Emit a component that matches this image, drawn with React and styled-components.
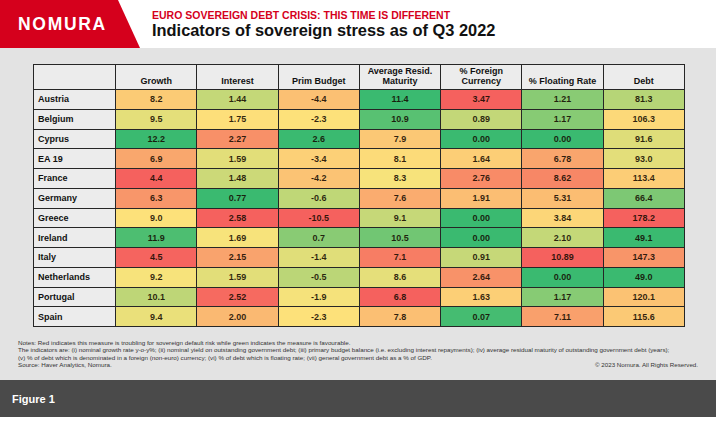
import React from 'react'
import styled, { createGlobalStyle } from 'styled-components'

// colour scale endpoints (red = bad, yellow = median, green = good)
const RED = [245, 97, 94]
const YELLOW = [253, 228, 123]
const GREEN = [58, 186, 112]

const columns = [
    { label: ['Growth'], higherBetter: true },
    { label: ['Interest'], higherBetter: false },
    { label: ['Prim Budget'], higherBetter: true },
    { label: ['Average Resid.', 'Maturity'], higherBetter: true },
    { label: ['% Foreign', 'Currency'], higherBetter: false },
    { label: ['% Floating Rate'], higherBetter: false },
    { label: ['Debt'], higherBetter: false },
]

const rows = [
    ['Austria', '8.2', '1.44', '-4.4', '11.4', '3.47', '1.21', '81.3'],
    ['Belgium', '9.5', '1.75', '-2.3', '10.9', '0.89', '1.17', '106.3'],
    ['Cyprus', '12.2', '2.27', '2.6', '7.9', '0.00', '0.00', '91.6'],
    ['EA 19', '6.9', '1.59', '-3.4', '8.1', '1.64', '6.78', '93.0'],
    ['France', '4.4', '1.48', '-4.2', '8.3', '2.76', '8.62', '113.4'],
    ['Germany', '6.3', '0.77', '-0.6', '7.6', '1.91', '5.31', '66.4'],
    ['Greece', '9.0', '2.58', '-10.5', '9.1', '0.00', '3.84', '178.2'],
    ['Ireland', '11.9', '1.69', '0.7', '10.5', '0.00', '2.10', '49.1'],
    ['Italy', '4.5', '2.15', '-1.4', '7.1', '0.91', '10.89', '147.3'],
    ['Netherlands', '9.2', '1.59', '-0.5', '8.6', '2.64', '0.00', '49.0'],
    ['Portugal', '10.1', '2.52', '-1.9', '6.8', '1.63', '1.17', '120.1'],
    ['Spain', '9.4', '2.00', '-2.3', '7.8', '0.07', '7.11', '115.6'],
]

const mix = (a, b, t) => {
    const c = a.map((v, i) => Math.round(v + (b[i] - v) * t))
    return `rgb(${c[0]}, ${c[1]}, ${c[2]})`
}

// excel style 3 colour scale: min, 50th percentile, max
const scaleFor = (colIndex) => {
    const values = rows.map((r) => parseFloat(r[colIndex + 1]))
    const sorted = [...values].sort((a, b) => a - b)
    const n = sorted.length
    const mid = n % 2 ? sorted[(n - 1) / 2] : (sorted[n / 2 - 1] + sorted[n / 2]) / 2
    const min = sorted[0]
    const max = sorted[n - 1]
    const { higherBetter } = columns[colIndex]
    const low = higherBetter ? RED : GREEN
    const high = higherBetter ? GREEN : RED
    return (v) => {
        if (v <= mid) return mix(low, YELLOW, mid === min ? 1 : (v - min) / (mid - min))
        return mix(YELLOW, high, (v - mid) / (max - mid))
    }
}

const scales = columns.map((_, i) => scaleFor(i))

function App() {
    return (
        <>
            <GlobalStyle />
            <Frame>
                {/* header */}
                <Header>
                    <LogoBlock>
                        <LogoText>NOMURA</LogoText>
                    </LogoBlock>
                    <TitleBlock>
                        <Kicker>EURO SOVEREIGN DEBT CRISIS: THIS TIME IS DIFFERENT</Kicker>
                        <Title>Indicators of sovereign stress as of Q3 2022</Title>
                    </TitleBlock>
                </Header>
                {/* chart panel */}
                <Panel>
                    <Table>
                        <colgroup>
                            <col style={{ width: 82 }} />
                            {columns.map((c) => <col key={c.label[0]} />)}
                        </colgroup>
                        <thead>
                            <tr>
                                <HeadCell />
                                {columns.map((c) => (
                                    <HeadCell key={c.label[0]}>
                                        {c.label.map((l, i) => (
                                            <React.Fragment key={l}>
                                                {i > 0 && <br />}
                                                {l}
                                            </React.Fragment>
                                        ))}
                                    </HeadCell>
                                ))}
                            </tr>
                        </thead>
                        <tbody>
                            {rows.map((r) => (
                                <Row key={r[0]}>
                                    <CountryCell>{r[0]}</CountryCell>
                                    {r.slice(1).map((v, i) => (
                                        <ValueCell key={i} $bg={scales[i](parseFloat(v))}>{v}</ValueCell>
                                    ))}
                                </Row>
                            ))}
                        </tbody>
                    </Table>
                    <Notes>
                        <NoteLine>Notes: Red indicates this measure is troubling for sovereign default risk while green indicates the measure is favourable.</NoteLine>
                        <NoteLine>The indicators are: (i) nominal growth rate y-o-y%; (ii) nominal yield on outstanding government debt; (iii) primary budget balance (i.e. excluding interest repayments); (iv) average residual maturity of outstanding government debt (years);</NoteLine>
                        <NoteLine>(v) % of debt which is denominated in a foreign (non-euro) currency; (vi) % of debt which is floating rate; (vii) general government debt as a % of GDP.</NoteLine>
                        <SourceRow>
                            <NoteLine>Source: Haver Analytics, Nomura.</NoteLine>
                            <Copyright>© 2023 Nomura. All Rights Reserved.</Copyright>
                        </SourceRow>
                    </Notes>
                </Panel>
                {/* figure band */}
                <FigureBand>Figure 1</FigureBand>
            </Frame>
        </>
    )
}

//style
const GlobalStyle = createGlobalStyle`
    html, body {
        margin: 0;
        padding: 0;
        background: #ffffff;
    }
    body {
        font-family: "Liberation Sans", Arial, sans-serif;
        color: #111;
    }
`
const Frame = styled.div`
    width: 716px;
    display: flex;
    flex-direction: column;
`
const Header = styled.div`
    height: 48px;
    display: flex;
    background: #ffffff;
`
const LogoBlock = styled.div`
    width: 140px;
    height: 100%;
    background: #d5001c;
    clip-path: polygon(0 0, 118px 0, 140px 100%, 0 100%);
    display: flex;
    align-items: center;
    padding-left: 18px;
    box-sizing: border-box;
`
const LogoText = styled.span`
    color: #ffffff;
    font-size: 17.5px;
    font-weight: 700;
    letter-spacing: 1.7px;
    margin-top: 1px;
`
const TitleBlock = styled.div`
    display: flex;
    flex-direction: column;
    padding: 9px 0 0 12px;
`
const Kicker = styled.div`
    color: #d5001c;
    font-size: 10.5px;
    font-weight: 700;
    line-height: 12px;
`
const Title = styled.div`
    color: #111;
    font-size: 16.4px;
    font-weight: 700;
    line-height: 19px;
`
const Panel = styled.div`
    height: 332px;
    background: #e3e3e3;
    padding: 16px 18px 0 18px;
    box-sizing: border-box;
    display: flex;
    flex-direction: column;
`
const Table = styled.table`
    width: 652px;
    margin-left: 15px;
    border-collapse: collapse;
    table-layout: fixed;
    border: 1px solid #262626;
`
const HeadCell = styled.th`
    height: 25px;
    padding: 0 2px 3px;
    box-sizing: border-box;
    background: #ececec;
    border: 1px solid #262626;
    vertical-align: bottom;
    font-size: 9px;
    line-height: 10px;
    font-weight: 700;
    text-align: center;
`
const Row = styled.tr`
    height: 19.75px;
`
const CountryCell = styled.td`
    background: #ececec;
    border: 1px solid #262626;
    padding: 0 0 0 4px;
    font-size: 9px;
    font-weight: 700;
    text-align: left;
`
const ValueCell = styled.td`
    background: ${(p) => p.$bg};
    border: 1px solid #262626;
    padding: 0;
    font-size: 9px;
    font-weight: 700;
    text-align: center;
    color: rgba(20, 10, 0, 0.88);
`
const Notes = styled.div`
    margin-top: 12px;
    display: flex;
    flex-direction: column;
`
const NoteLine = styled.div`
    font-size: 6.25px;
    line-height: 7.4px;
    color: #333;
    white-space: nowrap;
`
const SourceRow = styled.div`
    display: flex;
    justify-content: space-between;
    align-items: flex-end;
`
const Copyright = styled.div`
    font-size: 6.2px;
    line-height: 7.4px;
    color: #333;
`
const FigureBand = styled.div`
    height: 37px;
    background: #4a4a4a;
    color: #ffffff;
    display: flex;
    align-items: center;
    padding-left: 12px;
    font-size: 11px;
    font-weight: 700;
`

export default App
